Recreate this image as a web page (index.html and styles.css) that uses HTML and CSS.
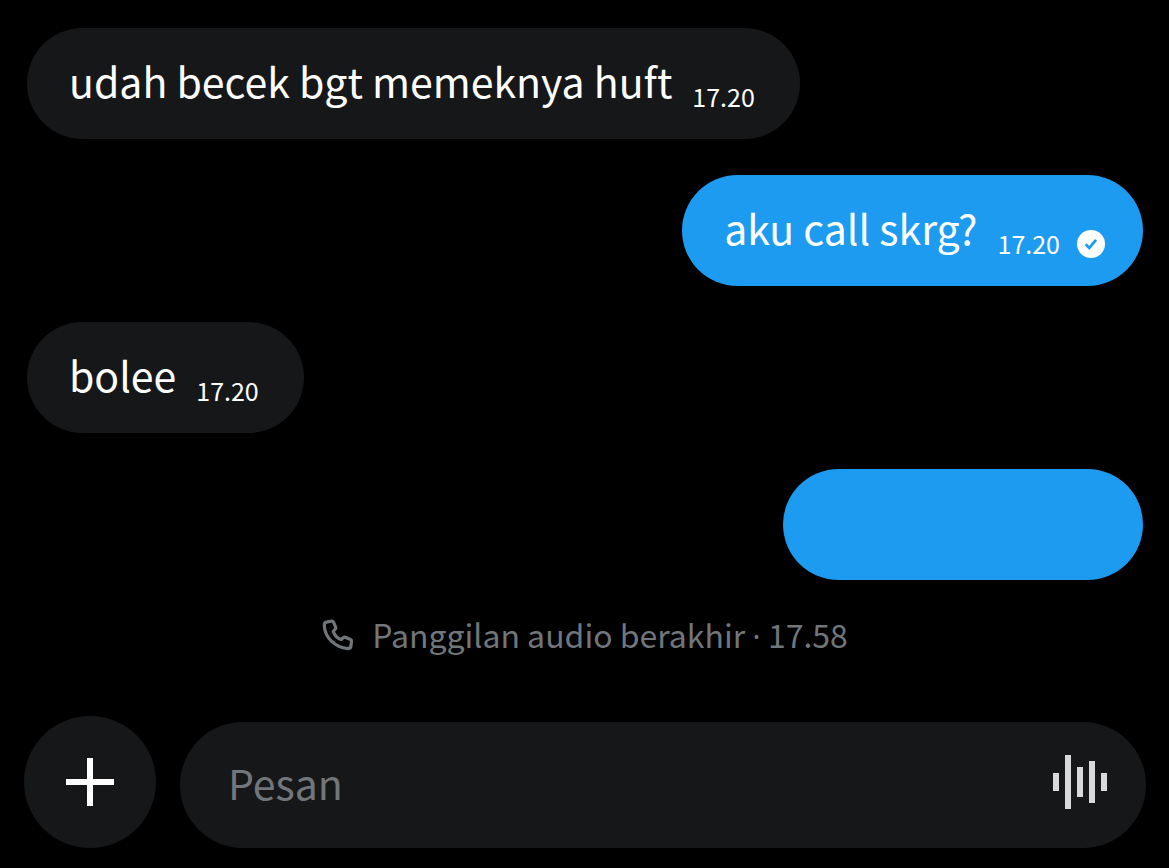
FILE: index.html
```
<!DOCTYPE html>
<html lang="id">
<head>
<meta charset="utf-8">
<meta name="viewport" content="width=device-width, initial-scale=1">
<title>Pesan</title>
<link rel="stylesheet" href="styles.css">
</head>
<body>
<main class="chat">
  <div class="bubble received">
    <p class="text">udah becek bgt memeknya huft</p>
    <time class="time">17.20</time>
  </div>
  <div class="bubble sent">
    <p class="text">aku call skrg?</p>
    <time class="time">17.20</time>
    <svg class="check" viewBox="0 0 28 28" role="img" aria-label="Terkirim"><circle cx="14" cy="14" r="14" fill="#fff"/><path d="M8.600 14.200l3.700 3.700 6.700-8" fill="none" stroke="#1d9bf0" stroke-width="2.800"/></svg>
  </div>
  <div class="bubble received">
    <p class="text">bolee</p>
    <time class="time">17.20</time>
  </div>
  <div class="bubble sent blank"></div>
  <div class="call">
    <svg class="phone" viewBox="0 0 32 32" aria-hidden="true"><path d="M5.200 2.800l4.600-.6c.8-.1 1.400.3 1.700 1l2.200 5.200c.3.700.1 1.300-.4 1.800l-2.100 2.200c1.300 3.800 4.200 6.700 8 8.200l2.300-2.100c.5-.5 1.100-.6 1.800-.3l5.200 2.300c.7.300 1.100.9 1 1.700l-.5 4.500c-.2 1.900-1.400 2.900-3.300 2.900C13.500 28.800 2.500 18.500 2.300 6.200c0-1.900 1-3.200 2.900-3.400z" fill="none" stroke="#71767b" stroke-width="3.200" stroke-linejoin="round"/></svg>
    <span>Panggilan audio berakhir <span class="dot">·</span> 17.58</span>
  </div>
</main>
<form class="composer">
  <button class="add" type="button" aria-label="Tambah"><svg class="plus" viewBox="0 0 48 48" aria-hidden="true"><path d="M21 0h6v21h21v6H27v21h-6V27H0v-6h21z" fill="#fff"/></svg></button>
  <div class="field">
    <input class="input" type="text" placeholder="Pesan" aria-label="Pesan">
    <button class="voice" type="button" aria-label="Rekam suara"><svg class="wave" viewBox="0 0 54 54" aria-hidden="true"><path d="M0 18h6v18H0zM12 0h6v54h-6zM24 12h6v30h-6zM36 6h6v42h-6zM48 18h6v18h-6z" fill="#d9d9db"/></svg></button>
  </div>
</form>
</body>
</html>
```
FILE: styles.css
```
* { box-sizing: border-box; }
body {
  margin: 0;
  min-height: 100vh;
  display: flex;
  flex-direction: column;
  justify-content: space-between;
  background: #000;
  color: #fff;
  font-family: "Noto Sans CJK JP", "Open Sans", sans-serif;
}
.chat {
  display: flex;
  flex-direction: column;
  gap: 36px;
  padding: 28px 26px 0 27px;
}
.bubble {
  display: flex;
  align-items: flex-start;
  padding: 20px 45px 20px 42px;
  border-radius: 56px;
  min-height: 111px;
}
.received { align-self: flex-start; background: #161719; }
.sent { align-self: flex-end; background: #1d9bf0; }
.sent:not(.blank) { padding-right: 38px; }
.blank { width: 360px; }
.text {
  margin: 0;
  font-size: 41px;
  line-height: 64px;
}
.time {
  margin: 28px 0 0 20px;
  font-size: 25px;
  line-height: 40px;
}
.check {
  width: 28px;
  height: 28px;
  margin: 35px 0 0 17px;
}
.call {
  display: flex;
  align-items: center;
  justify-content: center;
  gap: 18px;
  color: #71767b;
  font-size: 32px;
  line-height: 36px;
}
.dot { font-family: "Open Sans", sans-serif; }
.phone { width: 32px; height: 32px; }
.composer {
  display: flex;
  align-items: flex-end;
  gap: 24px;
  padding: 0 23px 20px 24px;
}
.add {
  display: flex;
  align-items: center;
  justify-content: center;
  flex: none;
  width: 132px;
  height: 132px;
  padding: 0;
  border: 0;
  border-radius: 50%;
  background: #161719;
}
.plus { width: 48px; height: 48px; }
.field {
  flex: 1;
  display: flex;
  align-items: center;
  min-height: 126px;
  padding: 0 39px 0 48px;
  border-radius: 64px;
  background: #161719;
}
.input {
  flex: 1;
  min-width: 0;
  padding: 0 0 6px;
  border: 0;
  outline: 0;
  background: transparent;
  color: #fff;
  font-family: inherit;
  font-size: 41px;
  line-height: 64px;
}
.input::placeholder { color: #71767b; opacity: 1; }
.voice {
  display: flex;
  padding: 0 0 6px;
  border: 0;
  background: transparent;
}
.wave { width: 54px; height: 54px; }
```
